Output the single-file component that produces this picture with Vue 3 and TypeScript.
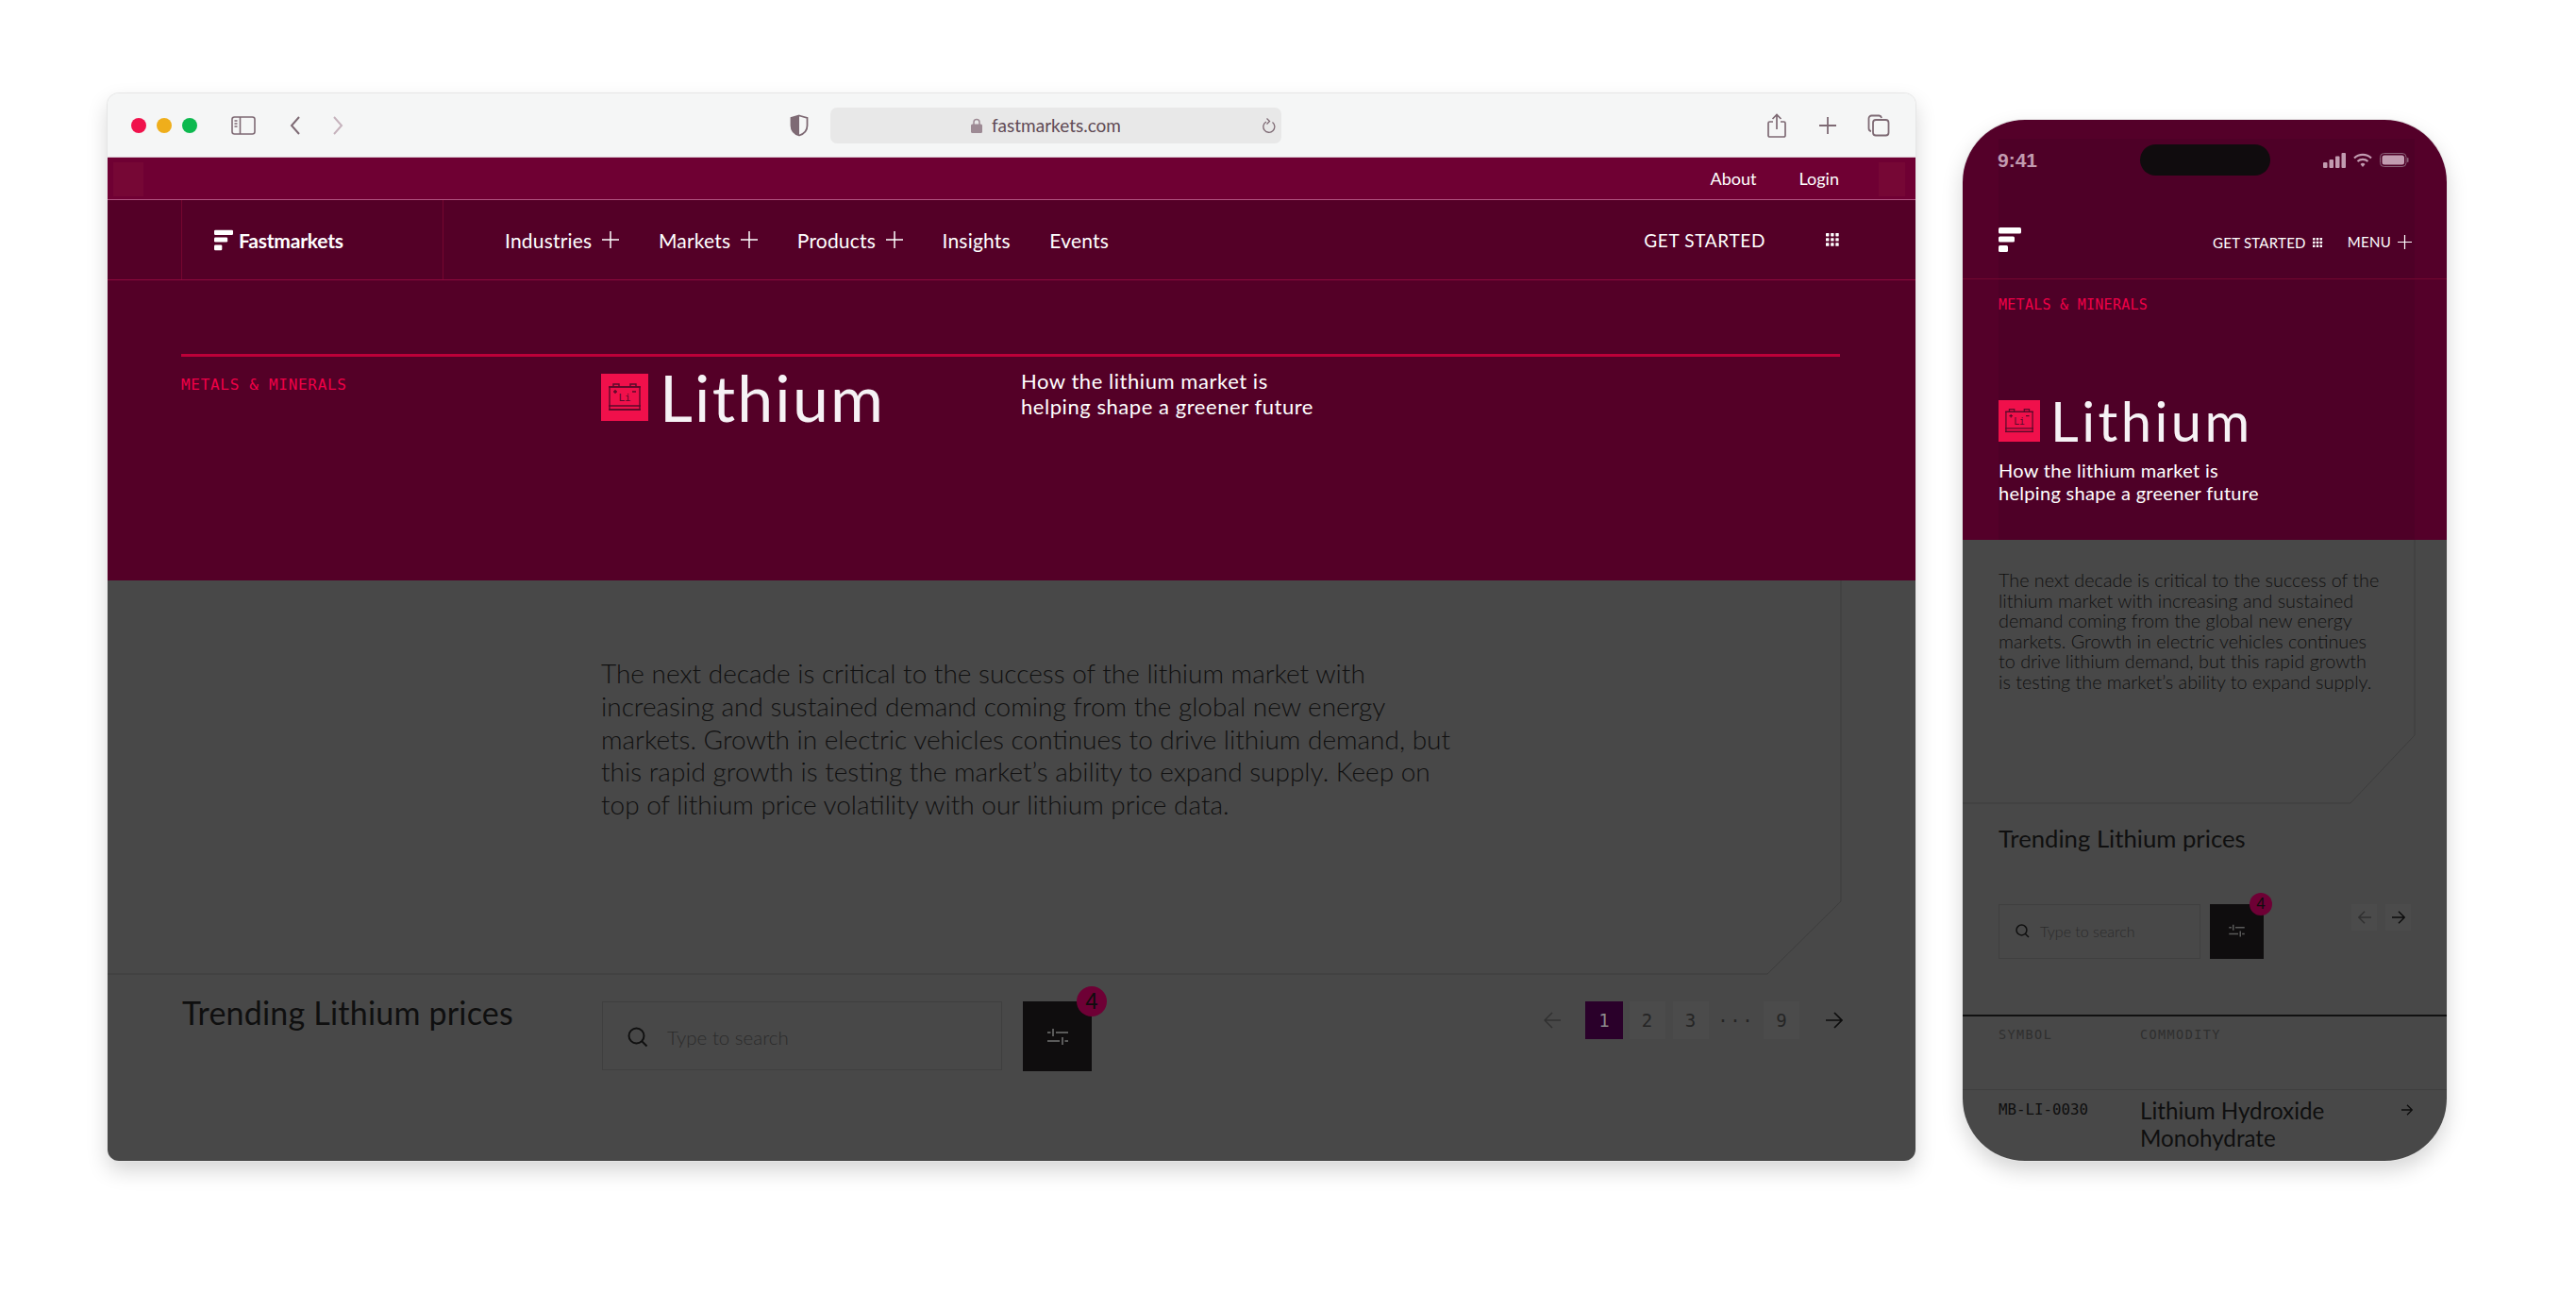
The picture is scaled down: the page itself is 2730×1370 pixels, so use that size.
<script setup lang="ts">
const navItems = [
  { label: 'Industries', plus: true },
  { label: 'Markets', plus: true },
  { label: 'Products', plus: true },
  { label: 'Insights', plus: false },
  { label: 'Events', plus: false },
]
const desktopParagraph = [
  'The next decade is critical to the success of the lithium market with',
  'increasing and sustained demand coming from the global new energy',
  'markets. Growth in electric vehicles continues to drive lithium demand, but',
  'this rapid growth is testing the market’s ability to expand supply. Keep on',
  'top of lithium price volatility with our lithium price data.',
]
const phoneParagraph = [
  'The next decade is critical to the success of the',
  'lithium market with increasing and sustained',
  'demand coming from the global new energy',
  'markets. Growth in electric vehicles continues',
  'to drive lithium demand, but this rapid growth',
  'is testing the market’s ability to expand supply.',
]
const gridDots = [0, 1, 2].flatMap((y) => [0, 1, 2].map((x) => ({ x: x * 5.5, y: y * 5.5 })))
</script>

<template>
  <div class="stage">
    <section class="browser">
      <header class="chrome">
        <div class="lights">
          <span class="light red"></span><span class="light amber"></span><span class="light green"></span>
        </div>
        <svg class="ic-sidebar" viewBox="0 0 26 20" fill="none" stroke="#7e6a74" stroke-width="1.6">
          <rect x="1" y="1" width="24" height="18" rx="2.5" />
          <path d="M9.5 1v18M3.5 5h3M3.5 8h3M3.5 11h3" />
        </svg>
        <svg class="ic-chev" viewBox="0 0 12 22" fill="none" stroke="#7e6a74" stroke-width="2"><path d="M10 2 2 11l8 9" /></svg>
        <svg class="ic-chev next" viewBox="0 0 12 22" fill="none" stroke="#c6b3bd" stroke-width="2"><path d="M2 2l8 9-8 9" /></svg>
        <svg class="ic-shield" viewBox="0 0 20 24">
          <path d="M10 1.5 18.5 4v8c0 5.500-4 9-8.500 10.500C5.500 21 1.500 17.500 1.500 12V4z" fill="#f5f6f6" stroke="#7e6a74" stroke-width="1.800" />
          <path d="M10 1.500 1.500 4v8c0 5.500 4 9 8.500 10.500z" fill="#7e6a74" />
        </svg>
        <div class="url">
          <svg class="ic-lock" viewBox="0 0 12 16"><path d="M3 7V4.500a3 3 0 0 1 6 0V7" fill="none" stroke="#9d8a94" stroke-width="1.500" /><rect y="6.500" width="12" height="9.500" rx="1.500" fill="#9d8a94" /></svg>
          <span class="url-text">fastmarkets.com</span>
          <svg class="ic-reload" viewBox="0 0 14 18" fill="none" stroke="#7e6a74" stroke-width="1.300"><path d="M10.500 5.500a6 6 0 1 1-6.500-.5" /><path d="M4.500 1.500 7.500 4.500 4.500 7.500" /></svg>
        </div>
        <svg class="ic-share" viewBox="0 0 20 26" fill="none" stroke="#7e6a74" stroke-width="1.700"><path d="M6 9H2.500A1.500 1.500 0 0 0 1 10.500v13A1.500 1.500 0 0 0 2.500 25h15a1.500 1.500 0 0 0 1.500-1.500v-13A1.500 1.500 0 0 0 17.500 9H14M10 17V2M5.500 6 10 1.500 14.500 6" /></svg>
        <svg class="ic-plus" viewBox="0 0 20 20" stroke="#7e6a74" stroke-width="1.800"><path d="M10 1v18M1 10h18" /></svg>
        <svg class="ic-tabs" viewBox="0 0 24 24" fill="none" stroke="#7e6a74" stroke-width="1.800"><path d="M4 18A3 3 0 0 1 1.500 15V4.500a3 3 0 0 1 3-3h8A3 3 0 0 1 15 4" /><rect x="6" y="6" width="16.500" height="16.500" rx="3" /></svg>
      </header>

      <div class="topbar">
        <span class="top-block"></span>
        <a class="top-link">About</a><a class="top-link login">Login</a>
        <span class="top-block end"></span>
      </div>

      <nav class="mainnav">
        <div class="brand">
          <svg class="f-logo" viewBox="0 0 24 26" fill="#fff"><rect width="24" height="6.500" rx="1.500" /><rect y="9.500" width="17" height="6" rx="1.500" /><rect y="19" width="10" height="7" rx="1.500" /></svg>
          <span class="brand-name">Fastmarkets</span>
        </div>
        <ul class="menu">
          <li v-for="item in navItems" :key="item.label" class="menu-item">
            {{ item.label }}
            <svg v-if="item.plus" class="nav-plus" viewBox="0 0 18 18" stroke="#fff" stroke-width="1.500"><path d="M9 0v18M0 9h18" /></svg>
          </li>
        </ul>
        <span class="started">GET STARTED</span>
        <svg class="grid-ic" viewBox="0 0 16 16" fill="#fff"><rect v-for="(d, i) in gridDots" :key="i" :x="d.x" :y="d.y" width="3.600" height="3.600" rx=".6" /></svg>
      </nav>

      <div class="hero">
        <div class="hero-row">
          <div class="eyebrow">METALS &amp; MINERALS</div>
          <div class="title-wrap">
            <svg class="li-icon" viewBox="0 0 50 50">
              <rect width="50" height="50" fill="#f0104b" />
              <g fill="none" stroke="#5b0a2a" stroke-width="1.400"><rect x="9" y="14" width="32" height="24" /><path d="M8 14h34M8 34h34M8 38h34M13 14V11h6v3M31 14V11h6v3M13 19h4M15 17v4M33 19h4" /></g>
              <text x="25" y="29" text-anchor="middle" class="li-text">Li</text>
            </svg>
            <h1 class="title">Lithium</h1>
          </div>
          <p class="tagline">How the lithium market is<br />helping shape a greener future</p>
        </div>
      </div>

      <div class="body">
        <svg class="deco" viewBox="0 0 1916 616" fill="none" stroke="#3d3d3d"><path d="M1837 0V340L1759 417H0" /></svg>
        <p class="lede"><span v-for="line in desktopParagraph" :key="line">{{ line }}</span></p>
        <div class="prices">
          <h2 class="prices-title">Trending Lithium prices</h2>
          <div class="search">
            <svg class="ic-search" viewBox="0 0 22 22" fill="none" stroke="#101010" stroke-width="2"><circle cx="9.500" cy="9.500" r="8" /><path d="m15 15 5.500 5.500" /></svg>
            <span class="placeholder">Type to search</span>
          </div>
          <button class="filter">
            <svg class="ic-sliders" viewBox="0 0 22 20" stroke="#5a5a5a" stroke-width="2"><path d="M0 5h3.500M9 5h13M6 1v8M0 14h13M18.500 14H22M16 10v8" /></svg>
            <span class="badge">4</span>
          </button>
          <div class="pager">
            <svg class="arrow dim" viewBox="0 0 18 18" fill="none" stroke="#303030" stroke-width="1.500"><path d="M18 9H1M9 1 1 9l8 8" /></svg>
            <span class="page active">1</span>
            <span class="page two">2</span>
            <span class="page">3</span>
            <span class="dots">···</span>
            <span class="page">9</span>
            <svg class="arrow last" viewBox="0 0 18 18" fill="none" stroke="#0d0d0d" stroke-width="1.700"><path d="M0 9h17M9 1l8 8-8 8" /></svg>
          </div>
        </div>
      </div>
    </section>

    <section class="phone">
      <div class="p-hero">
        <span class="strip"></span>
        <div class="status">
          <span class="clock">9:41</span>
          <span class="island"></span>
          <div class="status-icons">
            <svg class="signal" viewBox="0 0 24 16" fill="#c29bb0"><rect y="10" width="4.500" height="6" rx="1" /><rect x="6.500" y="7" width="4.500" height="9" rx="1" /><rect x="13" y="3.500" width="4.500" height="12.500" rx="1" /><rect x="19.500" width="4.500" height="16" rx="1" /></svg>
            <svg class="wifi" viewBox="0 0 20 16" fill="none" stroke="#c29bb0" stroke-width="2.200"><path d="M1 5.500a13 13 0 0 1 18 0M4.500 9a8 8 0 0 1 11 0" /><path d="M7.500 12 10 15l2.500-3a3.500 3.500 0 0 0-5 0z" fill="#c29bb0" stroke="none" /></svg>
            <svg class="battery" viewBox="0 0 31 15"><rect x=".5" y=".5" width="27.500" height="14" rx="4" fill="none" stroke="#8a6178" /><rect x="2.500" y="2.500" width="23.500" height="10" rx="2.500" fill="#c29bb0" /><rect x="29" y="5" width="1.500" height="5" rx=".7" fill="#8a6178" /></svg>
          </div>
        </div>
        <div class="p-nav">
          <svg class="p-logo" viewBox="0 0 24 26" fill="#fff"><rect width="24" height="6.500" rx="1.500" /><rect y="9.500" width="17" height="6" rx="1.500" /><rect y="19" width="10" height="7" rx="1.500" /></svg>
          <span class="p-started">GET STARTED</span>
          <svg class="p-grid" viewBox="0 0 16 16" fill="#fff"><rect v-for="(d, i) in gridDots" :key="i" :x="d.x" :y="d.y" width="3.600" height="3.600" rx=".6" /></svg>
          <span class="p-menu">MENU</span>
          <svg class="p-plus" viewBox="0 0 16 16" stroke="#fff" stroke-width="1.300"><path d="M8 0v16M0 8h16" /></svg>
        </div>
        <div class="p-head">
          <div class="p-eyebrow">METALS &amp; MINERALS</div>
          <div class="p-title-wrap">
            <svg class="p-li" viewBox="0 0 50 50">
              <rect width="50" height="50" fill="#f0104b" />
              <g fill="none" stroke="#5b0a2a" stroke-width="1.400"><rect x="9" y="14" width="32" height="24" /><path d="M8 14h34M8 34h34M8 38h34M13 14V11h6v3M31 14V11h6v3M13 19h4M15 17v4M33 19h4" /></g>
              <text x="25" y="29" text-anchor="middle" class="li-text">Li</text>
            </svg>
            <h1 class="p-title">Lithium</h1>
          </div>
          <p class="p-tagline">How the lithium market is<br />helping shape a greener future</p>
        </div>
      </div>
      <div class="p-body">
        <svg class="p-deco" viewBox="0 0 513 300" fill="none" stroke="#3d3d3d"><path d="M479 0V207L411 279H0" /></svg>
        <p class="p-lede"><span v-for="line in phoneParagraph" :key="line">{{ line }}</span></p>
        <h2 class="p-prices">Trending Lithium prices</h2>
        <div class="p-tools">
          <div class="p-search">
            <svg class="p-ic-search" viewBox="0 0 22 22" fill="none" stroke="#101010" stroke-width="2.200"><circle cx="9.500" cy="9.500" r="8" /><path d="m15 15 5.500 5.500" /></svg>
            <span class="p-placeholder">Type to search</span>
          </div>
          <button class="p-filter">
            <svg class="p-sliders" viewBox="0 0 22 20" stroke="#5a5a5a" stroke-width="2"><path d="M0 5h3.500M9 5h13M6 1v8M0 14h13M18.500 14H22M16 10v8" /></svg>
            <span class="p-badge">4</span>
          </button>
          <span class="p-arrow first">
            <svg viewBox="0 0 18 18" fill="none" stroke="#303030" stroke-width="1.800"><path d="M18 9H1M9 1 1 9l8 8" /></svg>
          </span>
          <span class="p-arrow">
            <svg viewBox="0 0 18 18" fill="none" stroke="#0d0d0d" stroke-width="1.800"><path d="M0 9h17M9 1l8 8-8 8" /></svg>
          </span>
        </div>
        <div class="p-thead">
          <span class="p-col">SYMBOL</span><span class="p-col">COMMODITY</span>
        </div>
        <div class="p-row">
          <span class="p-symbol">MB-LI-0030</span>
          <span class="p-name">Lithium Hydroxide<br />Monohydrate</span>
          <svg class="p-row-arrow" viewBox="0 0 18 18" fill="none" stroke="#0d0d0d" stroke-width="2"><path d="M0 9h17M9 1l8 8-8 8" /></svg>
        </div>
      </div>
    </section>
  </div>
</template>

<style scoped>
* { box-sizing: border-box; }
.stage {
  width: 2730px; height: 1370px; padding: 99px 0 0 114px; display: flex; gap: 50px; align-items: flex-start;
  background: #fff; font-family: Lato, "Noto Sans", sans-serif; overflow: hidden;
}
h1, h2, p { margin: 0; font-weight: 400; }

/* Desktop window */
.browser {
  width: 1916px; height: 1131px; border-radius: 12px; overflow: hidden; display: flex; flex-direction: column;
  box-shadow: 0 0 0 1px #e6e6e6, 0 10px 22px rgba(0, 0, 0, .17);
}
.chrome { height: 68px; background: #f5f6f6; display: flex; align-items: center; flex: none; border-bottom: 1px solid #d9c2cd; padding-left: 25px; }
.lights { display: flex; gap: 11px; }
.light { width: 16px; height: 16px; border-radius: 50%; }
.red { background: #f0124c; } .amber { background: #efae1b; } .green { background: #0db94f; }
.ic-sidebar { width: 26px; height: 20px; margin-left: 36px; }
.ic-chev { width: 12px; height: 22px; margin-left: 36px; }
.ic-chev.next { margin-left: 33px; }
.ic-shield { width: 20px; height: 24px; margin-left: 472.500px; }
.url {
  width: 478px; height: 38px; margin-left: 23.500px; background: #e8e8e8; border-radius: 7px; display: flex; align-items: center;
  padding-left: 149px; color: #5f4a55; font-size: 19px;
}
.ic-lock { width: 12px; height: 16px; margin-right: 10px; }
.url-text { width: 147px; white-space: nowrap; }
.ic-reload { width: 14px; height: 18px; margin-left: 140px; }
.ic-share { width: 20px; height: 26px; margin-left: 515px; }
.ic-plus { width: 20px; height: 20px; margin-left: 33.500px; }
.ic-tabs { width: 24px; height: 24px; margin-left: 32px; }

.topbar { height: 45px; background: #6f0033; border-bottom: 1px solid #b0527f; display: flex; align-items: center; color: #fff; font-size: 18px; flex: none; position: relative; padding-right: 81px; justify-content: flex-end; }
.top-block { position: absolute; left: 6px; top: 5px; width: 32px; height: 36px; background: #760735; }
.top-block.end { left: auto; right: 11px; width: 28px; }
.top-link.login { margin-left: 45px; }

.mainnav { height: 85px; background: #540027; border-bottom: 1px solid #8f0a3f; display: flex; align-items: center; color: #fff; font-size: 21px; flex: none; padding-left: 78px; padding-right: 80px; }
.brand { width: 278px; height: 100%; border-left: 1px solid #75062f; border-right: 1px solid #75062f; display: flex; align-items: center; padding-left: 34px; flex: none; }
.f-logo { width: 20px; height: 23px; }
.brand-name { font-size: 21px; font-weight: 700; margin-left: 6px; letter-spacing: -.2px; }
.menu { list-style: none; margin: 0 0 0 65px; padding: 0; display: flex; gap: 41.500px; flex: 1; letter-spacing: .2px; }
.menu-item { display: flex; align-items: center; gap: 11px; }
.nav-plus { width: 18px; height: 18px; }
.started { font-size: 19px; letter-spacing: .65px; }
.grid-ic { width: 15px; height: 15px; margin-left: 64px; }

.hero { height: 318px; background: #540027; padding: 78px 80px 0 78px; flex: none; }
.hero-row { border-top: 3px solid #bd0039; display: grid; grid-template-columns: 445px 445px 1fr; padding-top: 18px; }
.eyebrow { font-family: "DejaVu Sans Mono", monospace; font-size: 16px; letter-spacing: .7px; color: #f00048; line-height: 20px; margin-top: 2px; white-space: nowrap; }
.title-wrap { display: flex; align-items: flex-start; gap: 12px; }
.li-icon { width: 50px; height: 50px; flex: none; }
.li-text { font-family: "DejaVu Sans Mono", monospace; font-size: 11px; fill: #5b0a2a; }
.title { color: #f6f2f5; font-size: 68px; line-height: 50px; letter-spacing: 2.200px; }
.tagline { color: #fff; font-size: 22px; line-height: 27px; letter-spacing: .55px; margin-top: -6px; }

.body { flex: 1; background: #484848; position: relative; padding: 82px 78px 0 78px; }
.deco { position: absolute; left: 0; top: 0; width: 1916px; height: 616px; }
.lede { margin-left: 445px; font-size: 28px; line-height: 34.800px; font-weight: 300; color: #101010; position: relative; margin-top: -1px; }
.lede span { display: block; white-space: nowrap; }
.prices { position: relative; margin-top: 191px; display: flex; align-items: flex-start; }
.prices-title { width: 446px; padding-left: 1px; font-size: 34px; line-height: 32px; letter-spacing: .2px; color: #0f0f0f; margin-top: -4px; }
.search { width: 424px; height: 73px; border: 1px solid #3f3f3f; display: flex; align-items: center; padding: 4px 0 0 26px; }
.ic-search { width: 22px; height: 22px; }
.placeholder { margin-left: 20px; font-size: 20.500px; font-weight: 300; color: #2b2b2b; }
.filter { width: 73px; height: 74px; margin-left: 22px; background: #0f0d0e; border: 0; padding: 0; position: relative; display: flex; align-items: center; justify-content: center; }
.ic-sliders { width: 22px; height: 20px; margin-top: 2px; }
.badge { position: absolute; left: 57px; top: -16px; width: 32px; height: 32px; border-radius: 50%; background: #6e0035; color: #0f0d0e; font-size: 24px; line-height: 32px; text-align: center; }
.pager { margin-left: auto; margin-right: -1px; display: flex; align-items: center; height: 40px; color: #252525; font-family: "DejaVu Sans Mono", monospace; font-size: 19px; }
.arrow { width: 18px; height: 18px; }
.arrow.last { margin-left: 28px; }
.page { width: 38px; height: 40px; background: #4b4b4b; display: flex; align-items: center; justify-content: center; margin-left: 8px; }
.page.two { margin-left: 6.500px; }
.page.active { width: 40px; background: #2a002a; color: #8a8a8a; margin-left: 26px; }
.dots { width: 42.500px; margin-left: 8px; text-align: center; letter-spacing: 1.600px; }

/* Phone */
.phone {
  width: 513px; height: 1103px; margin-top: 28px; border-radius: 66px; overflow: hidden; display: flex; flex-direction: column;
  box-shadow: 0 0 0 1px #e6e6e6, 0 10px 22px rgba(0, 0, 0, .17);
}
.p-hero { height: 445px; background: #540029; position: relative; flex: none; color: #fff; }
.strip { position: absolute; top: 20px; bottom: 0; left: 38px; width: 441px; background: #4e0027; }
.status { position: relative; height: 59px; padding: 26px 40px 0 37px; display: grid; grid-template-columns: 1fr 138px 1fr; align-items: center; }
.clock { font-family: "Liberation Sans", sans-serif; font-weight: 700; font-size: 21px; color: #c29bb0; line-height: 33px; }
.island { height: 33px; background: #100c0e; border-radius: 17px; transform: translateX(2px); }
.status-icons { display: flex; align-items: center; justify-content: flex-end; gap: 8px; }
.signal { width: 24px; height: 16px; } .wifi { width: 20px; height: 16px; } .battery { width: 31px; height: 15px; }
.p-nav { position: relative; height: 110px; padding: 55px 37px 0 38px; border-bottom: 1px solid #74062f; display: flex; align-items: flex-start; }
.p-logo { width: 24px; height: 26px; }
.p-started { margin-left: auto; font-size: 15px; letter-spacing: .25px; line-height: 18px; margin-top: 7px; }
.p-grid { width: 11px; height: 11px; margin: 11px 0 0 7px; }
.p-menu { margin-left: 26px; font-size: 15px; letter-spacing: .3px; line-height: 18px; margin-top: 6px; }
.p-plus { width: 15px; height: 15px; margin: 8px 0 0 7px; }
.p-head { position: relative; padding: 18px 0 0 38px; }
.p-eyebrow { font-family: "DejaVu Sans Mono", monospace; font-size: 15px; letter-spacing: .27px; line-height: 18px; color: #f00048; white-space: nowrap; }
.p-title-wrap { display: flex; gap: 11px; margin-top: 92px; height: 44px; }
.p-li { width: 44px; height: 44px; flex: none; }
.p-title { color: #f6f2f5; font-size: 58px; line-height: 44px; letter-spacing: 3.400px; }
.p-tagline { margin-top: 18px; font-size: 20px; line-height: 24px; letter-spacing: .3px; }

.p-body { flex: 1; background: #484848; position: relative; padding-top: 32px; }
.p-deco { position: absolute; left: 0; top: 0; width: 513px; height: 300px; }
.p-lede { position: relative; padding-left: 38px; font-size: 19.800px; line-height: 21.600px; color: #101010; font-weight: 300; }
.p-lede span { display: block; white-space: nowrap; }
.p-prices { position: relative; margin: 139px 0 0 38px; font-size: 25.700px; line-height: 30px; color: #0f0f0f; }
.p-tools { position: relative; margin: 55px 38px 0 38px; display: flex; align-items: flex-start; height: 58px; }
.p-search { width: 214px; height: 58px; border: 1px solid #3f3f3f; display: flex; align-items: center; padding-left: 17px; }
.p-ic-search { width: 15px; height: 15px; }
.p-placeholder { margin-left: 11px; font-size: 16px; font-weight: 300; color: #2b2b2b; }
.p-filter { width: 57px; height: 58px; margin-left: 10px; background: #0f0d0e; border: 0; padding: 0; position: relative; display: flex; align-items: center; justify-content: center; }
.p-sliders { width: 17px; height: 15px; }
.p-badge { position: absolute; left: 42px; top: -12px; width: 24px; height: 24px; border-radius: 50%; background: #6e0035; color: #0f0d0e; font-size: 17px; line-height: 24px; text-align: center; }
.p-arrow { width: 27px; height: 28px; background: #4b4b4b; display: flex; align-items: center; justify-content: center; margin-left: 9px; }
.p-arrow.first { margin-left: auto; }
.p-arrow svg { width: 14px; height: 14px; }
.p-thead { position: relative; margin-top: 59px; height: 80px; border-top: 2px solid #111; border-bottom: 1px solid #3f3f3f; padding: 11px 0 0 38px; display: grid; grid-template-columns: 150px 1fr; font-family: "DejaVu Sans Mono", monospace; font-size: 13.500px; letter-spacing: 1.400px; color: #2f2f2f; align-content: start; }
.p-row { position: relative; padding: 7px 36px 0 38px; display: grid; grid-template-columns: 150px 1fr 12px; color: #0f0f0f; }
.p-symbol { font-family: "DejaVu Sans Mono", monospace; font-size: 15.800px; margin-top: 4px; }
.p-name { font-size: 24.200px; line-height: 29px; }
.p-row-arrow { width: 12px; height: 12px; margin-top: 8px; }
</style>

<style>
body { margin: 0; background: #fff; }
</style>
